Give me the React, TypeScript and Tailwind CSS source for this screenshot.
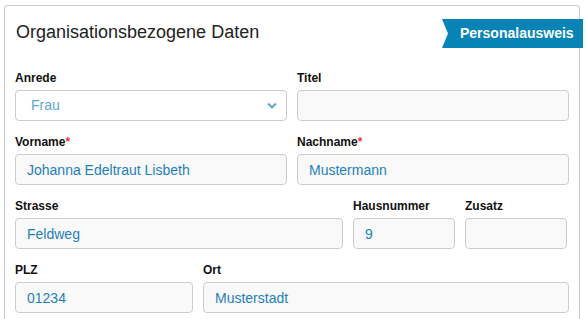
import React from "react";

const inputCls =
  "h-[31px] w-full rounded-[4px] border border-[#cccccc] bg-[#f9f9f9] px-[11px] text-[14px] text-[#1f7fb8] outline-none";

function Field({
  label,
  value,
  required,
  className,
}: {
  label: string;
  value?: string;
  required?: boolean;
  className?: string;
}) {
  return (
    <div className={className}>
      <div className="mb-[5px] h-[14px] text-[12px] font-bold leading-[14px] text-[#111]">
        {label}
        {required && <span className="text-[#e0403a]">*</span>}
      </div>
      <div className={inputCls + " flex items-center"}>
        <span className="leading-none">{value ?? ""}</span>
      </div>
    </div>
  );
}

export default function App() {
  return (
    <div
      className="relative h-[319px] w-[586px] overflow-hidden bg-white"
      style={{ fontFamily: '"Liberation Sans", Arial, sans-serif' }}
    >
      <div className="ml-[4px] mt-[5px] w-[576px] rounded-t-[4px] border border-b-0 border-[#cccccc] px-[10px] pb-[20px]">
        <div className="relative">
          <h2 className="pl-[1px] pt-[14px] text-[18px] leading-[24px] text-[#222]">
            Organisationsbezogene Daten
          </h2>
          <div
            className="absolute right-[-14px] top-[13px] flex h-[29px] w-[141px] items-center bg-[#0784b5] pl-[18px] text-[14px] font-bold text-white"
            style={{
              clipPath: "polygon(0 0, 100% 0, 100% 100%, 0 100%, 6px 50%)",
            }}
          >
            Personalausweis
          </div>
        </div>

        <div className="mt-[27px] flex gap-[10px]">
          <div className="w-[272px]">
            <div className="mb-[5px] h-[14px] text-[12px] font-bold leading-[14px] text-[#111]">
              Anrede
            </div>
            <div className="flex h-[31px] w-full items-center justify-between rounded-[4px] border border-[#cccccc] bg-white pl-[15px] pr-[5px] text-[14px] text-[#5aa9d4]">
              <span>Frau</span>
              <svg width="10" height="7" viewBox="0 0 10 7" className="mr-[4px]">
                <path
                  d="M1 1.5 L5 5.5 L9 1.5"
                  fill="none"
                  stroke="#5aa9d4"
                  strokeWidth="2"
                />
              </svg>
            </div>
          </div>
          <Field label="Titel" className="w-[272px]" />
        </div>

        <div className="mt-[14px] flex gap-[10px]">
          <Field
            label="Vorname"
            required
            value="Johanna Edeltraut Lisbeth"
            className="w-[272px]"
          />
          <Field
            label="Nachname"
            required
            value="Mustermann"
            className="w-[272px]"
          />
        </div>

        <div className="mt-[14px] flex gap-[10px]">
          <Field label="Strasse" value="Feldweg" className="w-[328px]" />
          <Field label="Hausnummer" value="9" className="w-[102px]" />
          <Field label="Zusatz" className="w-[102px]" />
        </div>

        <div className="mt-[14px] flex gap-[10px]">
          <Field label="PLZ" value="01234" className="w-[178px]" />
          <Field label="Ort" value="Musterstadt" className="w-[366px]" />
        </div>
      </div>
    </div>
  );
}
